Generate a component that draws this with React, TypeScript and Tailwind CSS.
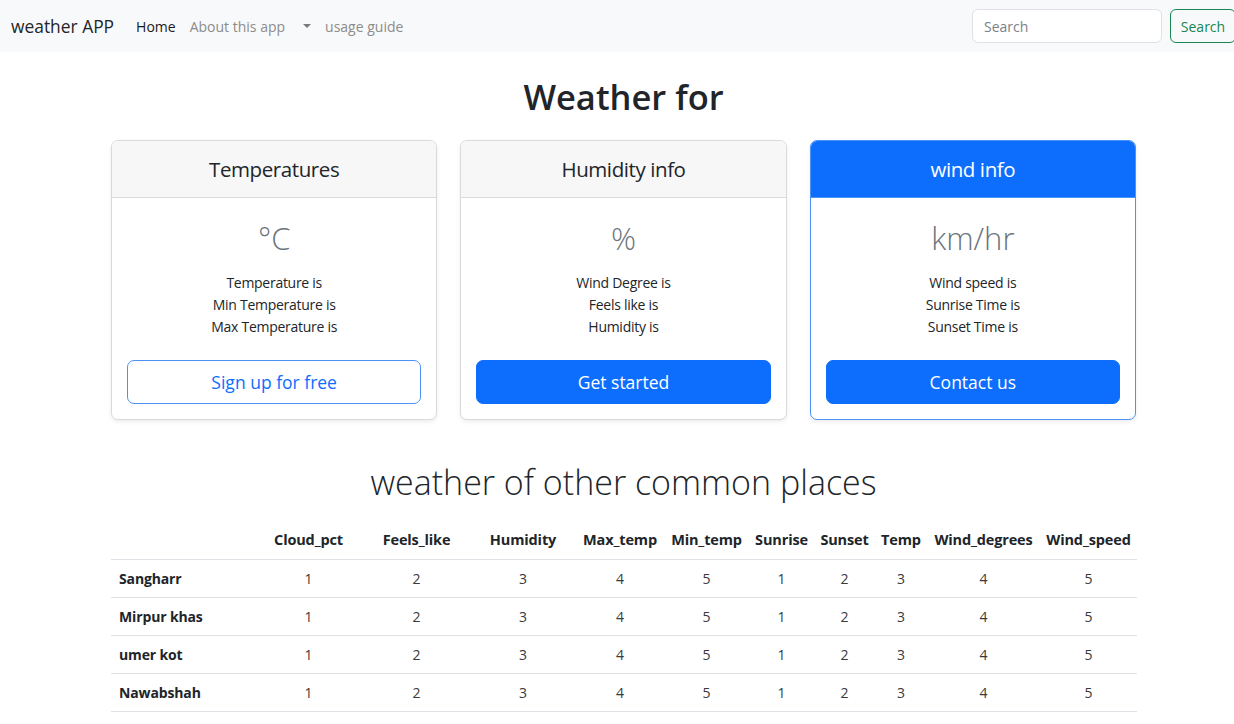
import React from "react";

const font = { fontFamily: '"Open Sans", "Noto Sans", sans-serif' };

const rows = ["Sangharr", "Mirpur khas", "umer kot", "Nawabshah"];
const cols: { name: string; w: string }[] = [
  { name: "Cloud_pct", w: "w-[109px]" },
  { name: "Feels_like", w: "w-[107px]" },
  { name: "Humidity", w: "w-[106px]" },
  { name: "Max_temp", w: "w-[88px]" },
  { name: "Min_temp", w: "w-[85px]" },
  { name: "Sunrise", w: "w-[65px]" },
  { name: "Sunset", w: "w-[61px]" },
  { name: "Temp", w: "w-[52px]" },
  { name: "Wind_degrees", w: "w-[113px]" },
  { name: "Wind_speed", w: "w-[97px]" },
];
const vals = [1, 2, 3, 4, 5, 1, 2, 3, 4, 5];

function Card({
  title,
  unit,
  lines,
  button,
  variant,
}: {
  title: string;
  unit: string;
  lines: string[];
  button: string;
  variant: "outline" | "solid" | "primary";
}) {
  const primary = variant === "primary";
  return (
    <div
      className={`flex-1 rounded-[7px] border bg-white shadow-[0_2px_4px_rgba(0,0,0,0.075)] overflow-hidden ${
        primary ? "border-[#4b93f6]" : "border-[#dadada]"
      }`}
    >
      <div
        className={`h-[57px] flex items-center justify-center border-b text-[20.5px] tracking-[-0.02em] ${
          primary
            ? "bg-[#0d6efd] text-white border-[#4b93f6]"
            : "bg-[#f7f7f7] text-[#212529] border-[#dadada]"
        }`}
      >
        {title}
      </div>
      <div className="px-[15px] pt-[18px] pb-[15px] flex flex-col items-center">
        <div className="h-[44px] flex items-center text-[31px] font-light text-[#6c757d]">
          {unit}
        </div>
        <ul className="mt-[12px] mb-[22px] text-[14px] tracking-[-0.02em] leading-[22px] text-[#212529] text-center">
          {lines.map((l) => (
            <li key={l}>{l}</li>
          ))}
        </ul>
        <button
          className={`w-full h-[44px] rounded-[7px] text-[17.5px] border ${
            variant === "outline"
              ? "bg-white border-[#4b93f6] text-[#0d6efd]"
              : "bg-[#0d6efd] border-[#0d6efd] text-white"
          }`}
        >
          {button}
        </button>
      </div>
    </div>
  );
}

export default function App() {
  return (
    <div className="w-full overflow-hidden bg-white" style={font}>
      <div className="w-[1247px]">
        <nav className="h-[52px] bg-[#f8f9fa] flex items-center pl-[11px] pr-[11px]">
          <span className="text-[17.4px] text-[#212529] mr-[15px]">weather APP</span>
          <div className="flex items-center text-[14px]">
            <a className="px-[7px] text-[#1a1a1a]">Home</a>
            <a className="px-[7px] text-[#8c8c8c]">About this app</a>
            <a className="px-[7px] text-[#8c8c8c] flex items-center h-[20px]">
              <span className="ml-[4px] inline-block w-0 h-0 border-l-[4.4px] border-r-[4.4px] border-t-[4.4px] border-l-transparent border-r-transparent border-t-[#7a7a7a]" />
            </a>
            <a className="px-[7px] text-[#8c8c8c]">usage guide</a>
          </div>
          <div className="ml-auto flex items-center">
            <div className="w-[190px] h-[34px] rounded-[6px] border border-[#dee2e6] bg-white flex items-center px-[11px] text-[14px] text-[#7b8188]">
              Search
            </div>
            <button className="ml-[8px] h-[34px] w-[66px] rounded-[6px] border border-[#198754] text-[#198754] text-[14px]">
              Search
            </button>
          </div>
        </nav>

        <main className="w-[1025px] mx-auto">
          <h1 className="h-[44px] mt-[23px] flex items-center justify-center text-[34.5px] font-semibold text-[#212529]">
            Weather for
          </h1>
          <div className="mt-[21px] flex gap-[23px]">
            <Card
              title="Temperatures"
              unit="°C"
              lines={["Temperature is", "Min Temperature is", "Max Temperature is"]}
              button="Sign up for free"
              variant="outline"
            />
            <Card
              title="Humidity info"
              unit="%"
              lines={["Wind Degree is", "Feels like is", "Humidity is"]}
              button="Get started"
              variant="solid"
            />
            <Card
              title="wind info"
              unit="km/hr"
              lines={["Wind speed is", "Sunrise Time is", "Sunset Time is"]}
              button="Contact us"
              variant="primary"
            />
          </div>

          <h2 className="mt-[40px] h-[44px] flex items-center justify-center text-[34px] font-light text-[#212529]">
            weather of other common places
          </h2>

          <table className="mt-[17px] w-full table-fixed border-collapse text-[14px] text-[#212529]">
            <thead>
              <tr className="h-[38px] border-b border-[#dee2e6]">
                <th className="w-[143px]"></th>
                {cols.map((c) => (
                  <th key={c.name} className={`${c.w} text-[14.5px] font-bold text-center whitespace-nowrap tracking-[-0.01em]`}>
                    {c.name}
                  </th>
                ))}
              </tr>
            </thead>
            <tbody>
              {rows.map((r) => (
                <tr key={r} className="h-[38px] border-b border-[#dee2e6]">
                  <td className="pl-[8px] font-bold text-left tracking-[-0.01em]">{r}</td>
                  {vals.map((v, i) => (
                    <td key={i} className="text-center text-[#3a3a3a]">
                      {v}
                    </td>
                  ))}
                </tr>
              ))}
            </tbody>
          </table>
        </main>
      </div>
    </div>
  );
}
